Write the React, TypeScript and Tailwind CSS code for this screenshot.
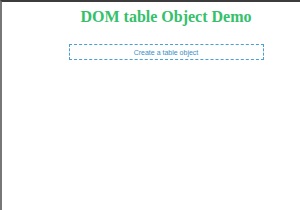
export default function App() {
  return (
    <div className="h-[210px] w-[300px] overflow-hidden bg-white border-t-2 border-l-2 border-t-[#3c3c3c] border-l-[#777777]">
      <div className="w-[328px] flex flex-col items-center">
        <h1 className="mt-[6px] text-[16px] leading-[18px] font-bold text-[#35c06c] font-['Liberation_Serif',serif]">
          DOM table Object Demo
        </h1>
        <button className="mt-[18px] w-[195px] h-[16px] border-[1.5px] border-dashed border-[#4a9fd4] text-[7px] leading-[13px] text-[#3a8fc4] font-['Liberation_Sans',Arial,sans-serif]">
          Create a table object
        </button>
      </div>
    </div>
  );
}
